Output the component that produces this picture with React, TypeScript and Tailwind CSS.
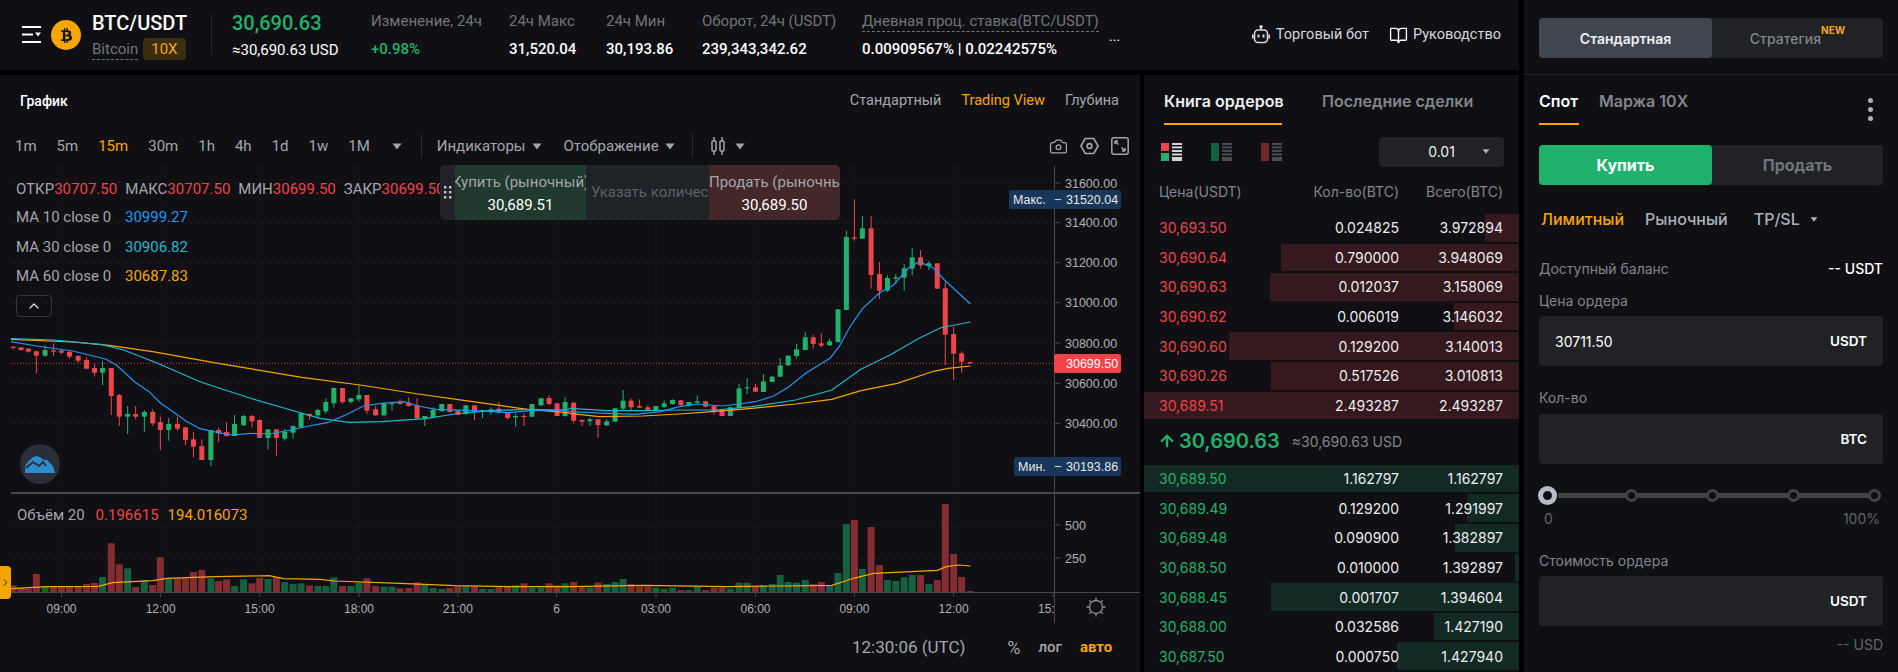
import React from 'react';
import { ArrowUp, BookOpen, Camera, ChevronRight, ChevronUp } from 'lucide-react';
import { FaBtc } from 'react-icons/fa';

type Bar = [number, number, number, number, number, 'g' | 'r', number];

const GREEN = '#20b26c';
const RED = '#ef454a';
const ORANGE = '#f7a600';

// values read off the chart: x, wick top, body top, body bottom, wick bottom, side, volume top
const leftBars: Bar[] = [
  [36, 80, 80, 84, 88, 'r', 796], [58, 82, 82, 90, 92, 'r', 804], [78, 84, 86, 95, 98, 'r', 806],
  [100, 92, 94, 107, 160, 'r', 762], [124, 76, 90, 107, 110, 'g', 800], [147, 70, 91, 95, 108, 'r', 800],
  [169, 88, 92, 98, 102, 'r', 800], [191, 92, 96, 110, 116, 'r', 800], [215, 106, 108, 122, 128, 'r', 800],
  [238, 112, 120, 146, 148, 'r', 792], [260, 132, 144, 158, 170, 'r', 789], [282, 124, 144, 158, 195, 'g', 771],
  [306, 144, 144, 228, 285, 'r', 670], [328, 222, 225, 290, 318, 'r', 733], [351, 258, 282, 290, 342, 'g', 745],
  [373, 258, 282, 290, 298, 'r', 801], [397, 270, 276, 290, 335, 'g', 781], [420, 268, 276, 310, 318, 'r', 795],
  [441, 290, 306, 330, 390, 'r', 712], [464, 294, 312, 330, 362, 'g', 775], [488, 290, 312, 326, 332, 'r', 775],
  [510, 320, 322, 360, 375, 'r', 775], [532, 336, 358, 380, 412, 'r', 756], [555, 358, 378, 420, 420, 'r', 750],
  [580, 330, 330, 420, 438, 'g', 775], [601, 322, 330, 340, 366, 'r', 783], [623, 306, 336, 348, 350, 'r', 778],
  [645, 285, 312, 348, 348, 'g', 798], [670, 285, 288, 316, 318, 'g', 778], [693, 285, 288, 304, 322, 'r', 790],
  [714, 298, 300, 354, 354, 'r', 774], [737, 328, 328, 354, 388, 'g', 777], [760, 328, 328, 354, 408, 'r', 771],
  [783, 326, 336, 356, 362, 'g', 786], [806, 316, 318, 338, 355, 'g', 792], [828, 278, 280, 322, 324, 'g', 790],
  [851, 280, 282, 288, 300, 'r', 796], [874, 266, 270, 286, 292, 'g', 798], [896, 235, 246, 274, 282, 'g', 798],
  [918, 202, 204, 250, 262, 'g', 772], [942, 204, 204, 246, 252, 'r', 798], [965, 234, 235, 246, 250, 'g', 798],
  [987, 196, 225, 238, 245, 'g', 788], [1009, 225, 225, 272, 282, 'r', 775], [1033, 258, 268, 286, 288, 'r', 798],
  [1056, 248, 250, 286, 288, 'g', 800], [1078, 248, 250, 252, 272, 'g', 800], [1100, 238, 246, 252, 254, 'r', 805],
  [1124, 232, 248, 258, 260, 'r', 804], [1147, 235, 256, 295, 296, 'r', 787], [1168, 288, 288, 296, 318, 'g', 795],
  [1191, 262, 270, 292, 294, 'g', 804], [1215, 252, 252, 274, 274, 'g', 807], [1237, 252, 252, 276, 278, 'r', 804],
  [1259, 272, 272, 284, 284, 'r', 798], [1281, 255, 256, 282, 284, 'g', 798], [1305, 255, 256, 276, 300, 'r', 800],
  [1327, 268, 270, 276, 294, 'g', 807], [1350, 262, 268, 276, 284, 'g', 807], [1372, 246, 266, 278, 280, 'r', 800],
  [1396, 276, 276, 294, 298, 'r', 800], [1418, 280, 288, 292, 320, 'g', 796], [1441, 280, 288, 290, 318, 'r', 790],
  [1463, 252, 252, 290, 290, 'g', 803], [1488, 234, 235, 256, 258, 'g', 803], [1510, 226, 234, 252, 256, 'r', 790],
  [1532, 250, 250, 288, 288, 'r', 796], [1554, 232, 246, 288, 290, 'g', 790],
];

const rightBars: Bar[] = [
  [10, 666, 668, 722, 730, 'r', 306], [33, 718, 720, 725, 738, 'r', 320], [55, 714, 718, 724, 738, 'g', 322],
  [77, 718, 718, 735, 773, 'r', 308], [101, 718, 724, 736, 738, 'g', 312], [124, 685, 685, 725, 725, 'g', 306],
  [146, 630, 662, 686, 690, 'g', 297], [168, 656, 662, 682, 694, 'r', 312], [191, 658, 678, 683, 684, 'r', 320],
  [214, 676, 682, 690, 692, 'r', 320], [236, 678, 678, 690, 692, 'g', 323], [259, 662, 670, 681, 684, 'g', 327],
  [282, 658, 660, 672, 674, 'g', 323], [305, 660, 661, 675, 678, 'r', 330], [327, 666, 666, 678, 680, 'g', 330],
  [350, 646, 664, 668, 670, 'g', 320], [373, 662, 664, 680, 682, 'r', 330], [396, 676, 678, 696, 704, 'r', 323],
  [418, 690, 690, 708, 708, 'r', 323], [441, 680, 682, 708, 708, 'g', 326], [465, 612, 625, 684, 684, 'g', 308],
  [487, 594, 622, 625, 642, 'g', 308], [510, 612, 622, 635, 636, 'r', 320], [532, 582, 604, 636, 636, 'g', 315],
  [556, 588, 590, 606, 606, 'g', 312], [578, 534, 556, 590, 590, 'g', 285], [600, 526, 527, 556, 558, 'g', 306],
  [623, 492, 508, 528, 536, 'g', 308], [647, 456, 472, 510, 510, 'g', 300], [669, 464, 472, 492, 506, 'r', 312],
  [691, 460, 490, 497, 502, 'r', 306], [714, 476, 484, 496, 498, 'g', 316], [737, 387, 388, 486, 488, 'g', 279],
  [760, 152, 171, 390, 390, 'g', 132], [782, 58, 172, 176, 182, 'r', 120], [804, 108, 145, 176, 176, 'g', 267],
  [828, 108, 145, 285, 326, 'r', 141], [851, 246, 282, 332, 356, 'r', 255], [873, 286, 294, 332, 336, 'g', 300],
  [896, 282, 292, 296, 312, 'g', 303], [919, 252, 265, 293, 332, 'g', 292], [941, 204, 232, 266, 286, 'g', 285],
  [964, 210, 232, 256, 266, 'r', 285], [987, 242, 250, 258, 270, 'g', 312], [1010, 250, 250, 326, 326, 'r', 300],
  [1032, 306, 325, 464, 556, 'r', 72], [1055, 440, 462, 521, 600, 'r', 222], [1077, 514, 520, 545, 578, 'r', 291],
  [1100, 546, 546, 550, 551, 'r', 333],
];

const leftX = (v: number) => v / 2.75;
const rightX = (v: number) => 570 + v / 2.75;

const candles = [
  ...leftBars.map((b) => ({
    x: leftX(b[0]), wt: 320 + b[1] / 3, t: 320 + b[2] / 3, b: 320 + b[3] / 3, wb: 320 + b[4] / 3, side: b[5], vol: 320 + b[6] / 3,
  })),
  ...rightBars.map((b) => ({
    x: rightX(b[0]), wt: 180 + b[1] / 3, t: 180 + b[2] / 3, b: 180 + b[3] / 3, wb: 180 + b[4] / 3, side: b[5], vol: 480 + b[6] / 3,
  })),
];

const line = (left: number[][], right: number[][], lx = 320, ry = 180) =>
  [
    ...left.map(([x, y]) => `${leftX(x).toFixed(1)},${(lx + y / 3).toFixed(1)}`),
    ...right.map(([x, y]) => `${rightX(x).toFixed(1)},${(ry + y / 3).toFixed(1)}`),
  ].join(' ');

const ma10 = line(
  [[30, 65], [100, 78], [200, 93], [290, 117], [320, 135], [370, 185], [410, 215], [440, 248], [480, 278], [510, 302], [550, 326], [600, 338], [640, 345], [690, 340], [740, 342], [800, 330], [850, 318], [900, 308], [950, 285], [1000, 258], [1050, 250], [1110, 245], [1150, 258], [1200, 268], [1300, 272], [1400, 278], [1460, 272], [1560, 270]],
  [[0, 695], [100, 700], [180, 703], [250, 695], [300, 680], [350, 672], [420, 678], [465, 672], [510, 665], [560, 648], [600, 622], [650, 578], [715, 535], [740, 500], [770, 440], [805, 385], [850, 340], [890, 315], [930, 265], [960, 245], [1000, 265], [1030, 300], [1101, 372]],
);
const ma30 = line(
  [[30, 56], [150, 60], [280, 74], [340, 90], [430, 128], [550, 185], [680, 232], [800, 270], [880, 295], [960, 307], [1050, 305], [1170, 296], [1250, 282], [1350, 272], [1450, 268], [1560, 270]],
  [[0, 685], [100, 692], [200, 692], [300, 690], [400, 690], [500, 680], [620, 660], [720, 630], [800, 568], [880, 525], [960, 475], [1020, 443], [1101, 426]],
);
const ma60 = line(
  [[30, 58], [200, 66], [300, 76], [420, 95], [600, 130], [830, 172], [990, 195], [1150, 222], [1300, 245], [1450, 268], [1560, 278]],
  [[0, 700], [80, 710], [200, 708], [300, 702], [400, 694], [500, 685], [620, 672], [720, 658], [800, 632], [900, 610], [1000, 574], [1040, 565], [1101, 558]],
);
const volMa = line(
  [[30, 806], [130, 800], [270, 799], [310, 788], [420, 782], [460, 775], [590, 770], [740, 767], [780, 776], [880, 778], [920, 783], [1100, 790], [1250, 797], [1400, 800], [1560, 800]],
  [[0, 320], [200, 316], [430, 320], [720, 316], [780, 295], [835, 280], [1010, 271], [1035, 260], [1070, 255], [1101, 258]],
  320,
  480,
);

const priceTicks = [
  ['31600.00', 183], ['31400.00', 222.7], ['31200.00', 262.7], ['31000.00', 302.7], ['30800.00', 343], ['30600.00', 383.3], ['30400.00', 423.3],
] as const;
const timeTicks = [
  ['09:00', 61.5], ['12:00', 160.7], ['15:00', 259.6], ['18:00', 359], ['21:00', 457.8], ['6', 556.7], ['03:00', 656], ['06:00', 755.5], ['09:00', 854.4], ['12:00', 953.6],
] as const;

const asks = [
  ['30,693.50', '0.024825', '3.972894', 34],
  ['30,690.64', '0.790000', '3.948069', 238],
  ['30,690.63', '0.012037', '3.158069', 249],
  ['30,690.62', '0.006019', '3.146032', 65],
  ['30,690.60', '0.129200', '3.140013', 290],
  ['30,690.26', '0.517526', '3.010813', 248],
  ['30,689.51', '2.493287', '2.493287', 375],
] as const;
const bids = [
  ['30,689.50', '1.162797', '1.162797', 375],
  ['30,689.49', '0.129200', '1.291997', 52],
  ['30,689.48', '0.090900', '1.382897', 64],
  ['30,688.50', '0.010000', '1.392897', 4],
  ['30,688.45', '0.001707', '1.394604', 248],
  ['30,688.00', '0.032586', '1.427190', 85],
  ['30,687.50', '0.000750', '1.427940', 122],
] as const;

const Caret = ({ className = '' }: { className?: string }) => (
  <svg width="10" height="7" viewBox="0 0 10 7" className={className} fill="currentColor">
    <path d="M0.5 0.5h9L5 6.5z" />
  </svg>
);

const Stat = ({ label, value, width, green }: { label: string; value: string; width: string; green?: boolean }) => (
  <div className={`flex flex-col gap-[8px] ${width}`}>
    <span className="text-[15px] leading-[20px] text-[#71757a] whitespace-nowrap">{label}</span>
    <span className={`text-[15px] leading-[20px] font-medium whitespace-nowrap ${green ? 'text-[#20b26c]' : 'text-white'}`}>{value}</span>
  </div>
);

const Header = () => (
  <header className="flex items-center h-[70px] bg-[#101014] pl-[22px] pr-[18px] font-['Roboto',sans-serif]">
    <svg width="19" height="18" viewBox="0 0 19 18" fill="none" className="text-white">
      <path d="M0 1h19M0 8.5h11M0 16h19" stroke="currentColor" strokeWidth="2" />
      <path d="M13 6.5h6l-3 4z" fill="currentColor" />
    </svg>
    <div className="flex items-center justify-center w-[30px] h-[30px] ml-[10px] rounded-full bg-[#f7a600]">
      <FaBtc className="text-[#15151a] text-[15px]" />
    </div>
    <div className="flex flex-col w-[119px] ml-[11px] self-stretch justify-center">
      <span className="text-[20px] leading-[24px] font-medium text-white mt-[1px]">BTC/USDT</span>
      <div className="flex items-center mt-[3px]">
        <span className="text-[15px] leading-[20px] text-[#71757a] border-b border-dashed border-[#71757a]">Bitcoin</span>
        <span className="ml-[5px] px-[8px] h-[22px] leading-[22px] rounded-[4px] bg-[#3a2d10] text-[15px] text-[#f7a600]">10X</span>
      </div>
    </div>
    <div className="w-px h-[40px] bg-[#25282c] mr-[20px]" />
    <div className="flex flex-col gap-[5px] w-[139px]">
      <span className="text-[20px] leading-[24px] font-medium text-[#20b26c]">30,690.63</span>
      <span className="text-[15px] leading-[20px] text-white">≈30,690.63 USD</span>
    </div>
    <Stat label="Изменение, 24ч" value="+0.98%" width="w-[138px]" green />
    <Stat label="24ч Макс" value="31,520.04" width="w-[97px]" />
    <Stat label="24ч Мин" value="30,193.86" width="w-[96px]" />
    <Stat label="Оборот, 24ч (USDT)" value="239,343,342.62" width="w-[160px]" />
    <div className="flex flex-col gap-[7px] w-[247px]">
      <span className="text-[15px] leading-[20px] text-[#71757a] w-fit border-b border-dashed border-[#71757a] whitespace-nowrap">Дневная проц. ставка(BTC/USDT)</span>
      <span className="text-[15px] leading-[20px] font-medium text-white whitespace-nowrap">0.00909567% | 0.02242575%</span>
    </div>
    <span className="text-white text-[14px] leading-none mt-[2px]">...</span>
    <div className="flex items-center ml-auto text-[14px] text-[#d6d8dc]">
      <svg width="18" height="20" viewBox="0 0 18 20" fill="none" stroke="currentColor" strokeWidth="1.6">
        <rect x="2.5" y="5" width="13" height="12.5" rx="3.5" />
        <path d="M9 5V2.5M0.8 9.5v4M17.2 9.5v4" />
        <circle cx="9" cy="1.8" r="1" fill="currentColor" />
        <path d="M6.5 9.5v3M11.5 9.5v3" strokeWidth="2" />
      </svg>
      <span className="ml-[6px] text-[14.5px]">Торговый бот</span>
      <BookOpen size={19} strokeWidth={1.7} className="ml-[20px] text-white" />
      <span className="ml-[5px] text-[14.5px]">Руководство</span>
    </div>
  </header>
);

const ChartCanvas = () => (
  <div className="relative h-[458px] font-['Roboto',sans-serif]">
    <svg width="1140" height="458" viewBox="0 165 1140 458" className="block font-['Liberation_Sans',sans-serif]">
      <defs>
        <clipPath id="axis-clip"><rect x="0" y="165" width="1054" height="458" /></clipPath>
      </defs>
      {/* grid */}
      {priceTicks.map(([, y]) => (
        <line key={y} x1="11" x2="1054" y1={y} y2={y} stroke="#24262b" strokeDasharray="1 3" />
      ))}
      <line x1="11" x2="1054" y1="525" y2="525" stroke="#24262b" strokeDasharray="1 3" />
      <line x1="11" x2="1054" y1="558" y2="558" stroke="#24262b" strokeDasharray="1 3" />
      {timeTicks.map(([, x]) => (
        <line key={x} x1={x} x2={x} y1="166" y2="592" stroke="#24262b" strokeDasharray="1 3" />
      ))}

      {/* candles */}
      {candles.map((c) => (
        <g key={c.x} fill={c.side === 'g' ? GREEN : RED} stroke="none">
          <rect x={c.x - 0.5} y={c.wt} width="1" height={c.wb - c.wt} />
          <rect x={c.x - 2.5} y={c.t} width="5" height={Math.max(c.b - c.t, 1)} />
        </g>
      ))}
      <polyline points={ma60} fill="none" stroke={ORANGE} strokeWidth="1.2" />
      <polyline points={ma30} fill="none" stroke="#1fb8cd" strokeWidth="1.2" />
      <polyline points={ma10} fill="none" stroke="#2196f3" strokeWidth="1.2" />
      <line x1="11" x2="1054" y1="363.3" y2="363.3" stroke={RED} strokeDasharray="1 2" strokeOpacity="0.8" />

      {/* volume */}
      {candles.map((c) => (
        <rect
          key={c.x}
          x={Math.max(c.x - 3.5, 11)}
          y={c.vol}
          width={c.x - 3.5 < 11 ? c.x + 3.5 - 11 : 7}
          height={592.3 - c.vol}
          fill={c.side === 'g' ? '#14603f' : '#842c32'}
        />
      ))}
      <polyline points={volMa} fill="none" stroke={ORANGE} strokeWidth="1.2" />

      {/* axes */}
      <rect x="11" y="492" width="1129" height="2" fill="#45484d" />
      <line x1="11" x2="1140" y1="592.5" y2="592.5" stroke="#45484d" />
      <line x1="1054.5" x2="1054.5" y1="166" y2="623" stroke="#45484d" />
      {priceTicks.map(([label, y]) => (
        <g key={label}>
          <line x1="1054" x2="1060" y1={y} y2={y} stroke="#45484d" />
          <text x="1065" y={y + 4.5} fontSize="12.5" fill="#aeb1b7">{label}</text>
        </g>
      ))}
      {[['500', 525], ['250', 558]].map(([label, y]) => (
        <g key={label}>
          <line x1="1054" x2="1060" y1={y} y2={y} stroke="#45484d" />
          <text x="1065" y={Number(y) + 4.5} fontSize="12.5" fill="#aeb1b7">{label}</text>
        </g>
      ))}
      {timeTicks.map(([label, x]) => (
        <g key={x}>
          <line x1={x} x2={x} y1="592" y2="597" stroke="#45484d" />
          <text x={x} y="612.5" fontSize="12" textAnchor="middle" fill="#aeb1b7">{label}</text>
        </g>
      ))}
      <line x1="1053" x2="1053" y1="592" y2="597" stroke="#45484d" />
      <text x="1038" y="612.5" fontSize="12" fill="#aeb1b7" clipPath="url(#axis-clip)">15:00</text>

      {/* price labels */}
      <rect x="1009" y="190" width="112" height="19" rx="2" fill="#183659" />
      <text x="1013" y="204" fontSize="12.5" fill="#e6e8ea">Макс.</text>
      <text x="1054" y="204" fontSize="12.5" fill="#e6e8ea">−</text>
      <text x="1066" y="204" fontSize="12.5" fill="#e6e8ea">31520.04</text>
      <rect x="1054" y="354" width="67" height="19" rx="2" fill={RED} />
      <text x="1066" y="368" fontSize="12.5" fill="#fff">30699.50</text>
      <rect x="1014" y="457" width="107" height="19" rx="2" fill="#183659" />
      <text x="1018" y="471" fontSize="12.5" fill="#e6e8ea">Мин.</text>
      <text x="1054" y="471" fontSize="12.5" fill="#e6e8ea">−</text>
      <text x="1066" y="471" fontSize="12.5" fill="#e6e8ea">30193.86</text>

      {/* theme toggle */}
      <g stroke="#8b8e94" strokeWidth="1.3" fill="none">
        <circle cx="1096" cy="607" r="6.5" />
        <path d="M1096 597.5v2.5M1096 614v2.5M1086.5 607h2.5M1103 607h2.5M1089.3 600.3l1.8 1.8M1100.9 611.9l1.8 1.8M1102.7 600.3l-1.8 1.8M1091.1 611.9l-1.8 1.8" />
      </g>
    </svg>

    {/* legend */}
    <div className="absolute left-[16px] top-[14px] flex flex-col text-[15px] text-[#a3a6ac] whitespace-nowrap">
      <div className="flex h-[20px] items-center">
        <span>ОТКР</span><span className="text-[#ef454a] mr-[8px]">30707.50</span>
        <span>МАКС</span><span className="text-[#ef454a] mr-[8px]">30707.50</span>
        <span>МИН</span><span className="text-[#ef454a] mr-[8px]">30699.50</span>
        <span>ЗАКР</span><span className="text-[#ef454a]">30699.50</span>
      </div>
      <div className="flex h-[20px] items-center mt-[8px]"><span className="w-[109px]">MA 10 close 0</span><span className="text-[#2196f3]">30999.27</span></div>
      <div className="flex h-[20px] items-center mt-[10px]"><span className="w-[109px]">MA 30 close 0</span><span className="text-[#1fb8cd]">30906.82</span></div>
      <div className="flex h-[20px] items-center mt-[9px]"><span className="w-[109px]">MA 60 close 0</span><span className="text-[#f7a600]">30687.83</span></div>
      <div className="flex items-center justify-center w-[36px] h-[22px] mt-[9px] rounded-[4px] border border-[#33363b] text-[#d6d8dc]">
        <ChevronUp size={16} />
      </div>
    </div>

    {/* quick trade */}
    <div className="absolute left-[440px] top-0 flex w-[400px] h-[55px] rounded-[5px] overflow-hidden bg-[#1f2226] text-[15px] whitespace-nowrap">
      <div className="flex items-center justify-center w-[15px] text-[#c5c7cb]">
        <svg width="8" height="16" viewBox="0 0 8 16" fill="currentColor">
          {[1, 6, 11].map((y) => (
            <g key={y}>
              <rect x="0" y={y} width="2.4" height="2.4" />
              <rect x="5" y={y} width="2.4" height="2.4" />
            </g>
          ))}
        </svg>
      </div>
      <div className="flex flex-col items-center justify-center w-[131px] bg-[#213a2f] overflow-hidden">
        <span className="text-[#a3a6ac] leading-[24px]">Купить (рыночный)</span>
        <span className="text-white leading-[22px]">30,689.51</span>
      </div>
      <div className="flex items-center w-[123px] pl-[5px] overflow-hidden text-[#5d6066]">Указать количество</div>
      <div className="flex flex-col items-center justify-center w-[131px] bg-[#432729] overflow-hidden">
        <span className="self-start text-[#a3a6ac] leading-[24px]">Продать (рыночный)</span>
        <span className="text-white leading-[22px]">30,689.50</span>
      </div>
    </div>

    {/* logo */}
    <div className="absolute left-[20px] top-[279px] flex items-center justify-center w-[40px] h-[40px] rounded-full bg-[#2a2e39]">
      <svg width="30" height="18" viewBox="0 0 30 18" fill="#2b9fea">
        <path d="M0 12c1-4 4-6 6-8 2-3 7-4 10-1 2 2 4 2 6 2 2 2 4 4 6 6l2 7H0z" fillOpacity="0.85" />
        <path d="M1 13l7-6 6 4 4-4 3 4" fill="none" stroke="#2a2e39" strokeWidth="2" />
      </svg>
    </div>

    {/* volume legend */}
    <div className="absolute left-[17px] top-[340px] flex items-center h-[20px] text-[15px] text-[#a3a6ac] whitespace-nowrap">
      <span>Объём 20</span>
      <span className="ml-[11px] text-[#ef454a]">0.196615</span>
      <span className="ml-[9px] text-[#f7a600]">194.016073</span>
    </div>

    {/* panel handle */}
    <div className="absolute left-0 top-[401px] flex items-center justify-center w-[11px] h-[33px] rounded-r-[4px] bg-[#f7a600] text-[#15151a]">
      <ChevronRight size={11} strokeWidth={2} />
    </div>
  </div>
);

const ChartPanel = () => (
  <section className="flex flex-col w-[1140px] bg-[#101014] font-['Roboto',sans-serif]">
    <div className="flex items-center justify-between h-[52px] pl-[20px] pr-[21px]">
      <span className="text-[14px] font-medium text-white">График</span>
      <div className="flex items-center gap-[20px] text-[14.5px] text-[#a3a6ac]">
        <span>Стандартный</span>
        <span className="text-[#f7a600]">Trading View</span>
        <span>Глубина</span>
      </div>
    </div>
    <div className="flex items-center h-[38px] text-[15px] text-[#a3a6ac]">
      <span className="ml-[15px]">1m</span>
      <span className="ml-[20px]">5m</span>
      <span className="ml-[20px] text-[#f7a600]">15m</span>
      <span className="ml-[20px]">30m</span>
      <span className="ml-[20px]">1h</span>
      <span className="ml-[20px]">4h</span>
      <span className="ml-[20px]">1d</span>
      <span className="ml-[20px]">1w</span>
      <span className="ml-[20px]">1M</span>
      <Caret className="ml-[22px]" />
      <div className="w-px h-[24px] bg-[#2a2c31] ml-[19px]" />
      <span className="ml-[15px]">Индикаторы</span>
      <Caret className="ml-[6px]" />
      <span className="ml-[22px]">Отображение</span>
      <Caret className="ml-[6px]" />
      <div className="w-px h-[24px] bg-[#2a2c31] ml-[17px]" />
      <svg width="16" height="20" viewBox="0 0 16 20" fill="none" stroke="currentColor" strokeWidth="1.5" className="ml-[17px]">
        <path d="M4 1v18M12 1v18" />
        <rect x="2" y="5" width="4" height="10" rx="1" fill="#101014" />
        <rect x="10" y="5" width="4" height="10" rx="1" fill="#101014" />
      </svg>
      <Caret className="ml-[9px]" />
      <div className="flex items-center ml-auto mr-[11px]">
        <Camera size={19} strokeWidth={1.6} />
        <svg width="19" height="18" viewBox="0 0 19 18" fill="none" stroke="currentColor" strokeWidth="1.6" className="ml-[12px]">
          <path d="M5.2 1.5h8.6l4.3 7.5-4.3 7.5H5.2L0.9 9z" />
          <circle cx="9.5" cy="9" r="2.4" />
        </svg>
        <svg width="18" height="18" viewBox="0 0 18 18" fill="none" stroke="currentColor" strokeWidth="1.5" className="ml-[12px]">
          <rect x="0.8" y="0.8" width="16.4" height="16.4" rx="2" />
          <path d="M4 4l3.5 3.5M4 4v3M4 4h3M14 14l-3.5-3.5M14 14v-3M14 14h-3" />
        </svg>
      </div>
    </div>
    <ChartCanvas />
    <div className="flex items-center h-[49px]">
      <span className="ml-[852px] text-[17px] text-[#a3a6ac] whitespace-nowrap">12:30:06 (UTC)</span>
      <span className="ml-[42px] text-[18px] text-[#a3a6ac]">%</span>
      <span className="ml-[18px] text-[15px] font-medium text-[#a3a6ac]">лог</span>
      <span className="ml-[18px] text-[15px] font-bold text-[#f7a600]">авто</span>
    </div>
  </section>
);

const BookRow = ({ row, side }: { row: readonly [string, string, string, number]; side: 'ask' | 'bid' }) => (
  <div className="relative flex items-center h-[28px] mb-[2px] pl-[15px] pr-[16px] text-[14px]">
    <div
      className={`absolute right-0 top-0 bottom-0 ${side === 'ask' ? 'bg-[#35191e]' : 'bg-[#132a24]'}`}
      style={{ width: row[3] }}
    />
    <span className={`relative w-[100px] ${side === 'ask' ? 'text-[#ef454a]' : 'text-[#20b26c]'}`}>{row[0]}</span>
    <span className="relative w-[140px] text-right text-[#eceef0]">{row[1]}</span>
    <span className="relative flex-1 text-right text-[#eceef0]">{row[2]}</span>
  </div>
);

const BookIcon = ({ top, bottom, lines }: { top: string; bottom: string; lines: string }) => (
  <svg width="21" height="18" viewBox="0 0 21 18">
    <rect x="0" y="0" width="8" height="8" fill={top} />
    <rect x="0" y="10" width="8" height="8" fill={bottom} />
    {top === bottom && <rect x="0" y="7" width="8" height="4" fill={top} />}
    {[0, 3.4, 7, 10.5, 14, 16].map((y) => (
      <rect key={y} x="11" y={y} width="10" height="2" fill={lines} />
    ))}
  </svg>
);

const OrderBook = () => (
  <section className="flex flex-col w-[375px] bg-[#101014] overflow-hidden">
    <div className="flex h-[50px] pl-[20px] text-[16px] font-semibold">
      <div className="flex flex-col w-[118px] mr-[40px]">
        <span className="mt-[15px] leading-[22px] text-[#eceef0] whitespace-nowrap">Книга ордеров</span>
        <div className="w-full h-[2px] mt-[11px] bg-[#f7a600]" />
      </div>
      <span className="mt-[15px] leading-[22px] text-[#81858c] whitespace-nowrap">Последние сделки</span>
    </div>
    <div className="flex items-center h-[38px] mt-[8px] pl-[17px]">
      <BookIcon top="#ef454a" bottom="#20b26c" lines="#d3d4d6" />
      <div className="ml-[29px]"><BookIcon top="#14603f" bottom="#14603f" lines="#4a4c50" /></div>
      <div className="ml-[29px]"><BookIcon top="#6e2a2e" bottom="#6e2a2e" lines="#4a4c50" /></div>
      <div className="relative flex items-center justify-center w-[125px] h-[30px] ml-[auto] mr-[15px] rounded-[4px] bg-[#202226] text-[14px] text-[#eceef0]">
        0.01
        <Caret className="absolute right-[13px] text-[#adb1b8] scale-75" />
      </div>
    </div>
    <div className="flex items-center h-[42px] mb-[2px] pl-[15px] pr-[16px] text-[14px] text-[#81858c]">
      <span className="w-[100px] whitespace-nowrap">Цена(USDT)</span>
      <span className="w-[140px] text-right whitespace-nowrap">Кол-во(BTC)</span>
      <span className="flex-1 text-right whitespace-nowrap">Всего(BTC)</span>
    </div>
    {asks.map((row) => <BookRow key={row[0]} row={row} side="ask" />)}
    <div className="flex items-center h-[44px] pl-[14px] mb-[2px] -mt-[2px]">
      <ArrowUp size={18} strokeWidth={3} className="text-[#20b26c]" />
      <span className="ml-[3px] text-[20px] font-semibold text-[#20b26c]">30,690.63</span>
      <span className="ml-[12px] text-[14px] text-[#81858c]">≈30,690.63 USD</span>
    </div>
    {bids.map((row) => <BookRow key={row[0]} row={row} side="bid" />)}
  </section>
);

const Field = ({ value, unit, className = '' }: { value?: string; unit: string; className?: string }) => (
  <div className={`flex items-center justify-between h-[50px] pl-[16px] pr-[16px] rounded-[4px] bg-[#202226] text-white ${className}`}>
    <span className="text-[14px]">{value}</span>
    <span className="text-[13.5px] font-semibold">{unit}</span>
  </div>
);

const OrderForm = () => (
  <aside className="flex flex-col w-[374px] h-full bg-[#101014] text-[14px]">
    <div className="flex items-start h-[75px] pt-[18px] px-[15px] border-b border-[#1f2226]">
      <div className="flex flex-1 h-[40px] rounded-[4px] bg-[#202226]">
        <div className="flex items-center justify-center w-[173px] rounded-[4px] bg-[#404650] font-semibold text-[#eceef0]">Стандартная</div>
        <div className="flex flex-1 items-center justify-center font-medium text-[#81858c]">
          Стратегия
          <sup className="-mt-[7px] text-[10px] font-bold text-[#f7a600]">NEW</sup>
        </div>
      </div>
    </div>
    <div className="flex flex-col px-[15px]">
      <div className="flex items-start h-[50px] text-[16px] font-semibold">
        <div className="flex flex-col w-[40px]">
          <span className="mt-[15px] leading-[22px] text-white">Спот</span>
          <div className="h-[2px] mt-[11px] bg-[#f7a600]" />
        </div>
        <span className="ml-[20px] mt-[15px] leading-[22px] text-[#81858c] whitespace-nowrap">Маржа 10X</span>
        <div className="flex flex-col gap-[4px] ml-auto mr-[10px] mt-[23px]">
          <div className="w-[5px] h-[5px] rounded-full bg-[#adb1b8]" />
          <div className="w-[5px] h-[5px] rounded-full bg-[#adb1b8]" />
          <div className="w-[5px] h-[5px] rounded-full bg-[#adb1b8]" />
        </div>
      </div>
      <div className="flex h-[40px] mt-[20px] rounded-[4px] bg-[#202226] text-[16px] font-bold">
        <div className="flex items-center justify-center w-[173px] rounded-[4px] bg-[#20b26c] text-white">Купить</div>
        <div className="flex flex-1 items-center justify-center text-[#71757a]">Продать</div>
      </div>
      <div className="flex items-center h-[24px] mt-[22px] pl-[2px] text-[16px] font-medium text-[#adb1b8]">
        <span className="text-[#f7a600]">Лимитный</span>
        <span className="ml-[21px]">Рыночный</span>
        <span className="ml-[26px]">TP/SL</span>
        <Caret className="ml-[9px] scale-75" />
      </div>
      <div className="flex items-center justify-between h-[20px] mt-[27px] text-[#81858c]">
        <span>Доступный баланс</span>
        <span className="font-medium text-white">-- USDT</span>
      </div>
      <span className="h-[20px] mt-[13px] leading-[20px] text-[#81858c]">Цена ордера</span>
      <Field value="30711.50" unit="USDT" className="mt-[5px]" />
      <span className="h-[20px] mt-[22px] leading-[20px] text-[#81858c]">Кол-во</span>
      <Field unit="BTC" className="mt-[6px]" />
      <div className="relative flex items-center justify-between h-[19px] mt-[22px] -ml-[1px] mr-[2px]">
        <div className="absolute left-[20px] right-[2px] h-[5px] bg-[#404347]" />
        <div className="relative w-[19px] h-[19px] rounded-full border-[5px] border-[#b7bdc6] bg-[#101014]" />
        <div className="relative w-[13px] h-[13px] rounded-full border-[3px] border-[#404347] bg-[#101014]" />
        <div className="relative w-[13px] h-[13px] rounded-full border-[3px] border-[#404347] bg-[#101014]" />
        <div className="relative w-[13px] h-[13px] rounded-full border-[3px] border-[#404347] bg-[#101014]" />
        <div className="relative w-[13px] h-[13px] rounded-full border-[3px] border-[#404347] bg-[#101014]" />
      </div>
      <div className="flex justify-between h-[20px] mt-[3px] pl-[5px] pr-[3px] text-[#5f6368]">
        <span>0</span>
        <span>100%</span>
      </div>
      <span className="h-[20px] mt-[23px] leading-[20px] text-[#81858c]">Стоимость ордера</span>
      <Field unit="USDT" className="mt-[5px]" />
      <span className="mt-[8px] text-right text-[#5f6368]">-- USD</span>
    </div>
  </aside>
);

export default function App() {
  return (
    <div className="flex justify-between w-[1898px] h-[672px] overflow-hidden bg-black font-['Inter',sans-serif]">
      <div className="flex flex-col w-[1519px]">
        <Header />
        <div className="flex justify-between h-[597px] mt-[5px]">
          <ChartPanel />
          <OrderBook />
        </div>
      </div>
      <OrderForm />
    </div>
  );
}
